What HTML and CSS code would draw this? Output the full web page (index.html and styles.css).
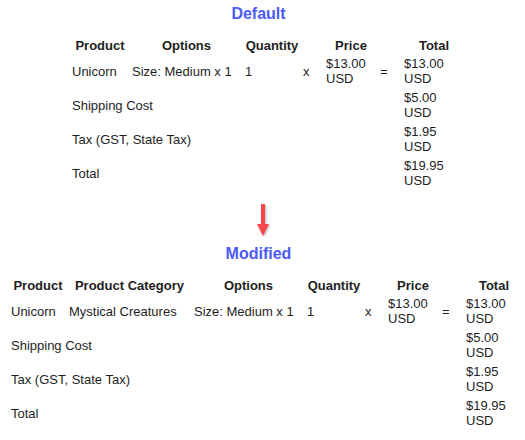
FILE: index.html
```html
<!DOCTYPE html>
<html lang="en">
<head>
<meta charset="utf-8">
<title>Order summary</title>
<link rel="stylesheet" href="styles.css">
</head>
<body>
  <h2 class="title">Default</h2>
  <div class="order order-default">
    <div class="th">Product</div>
    <div class="th">Options</div>
    <div class="th">Quantity</div>
    <div class="th"></div>
    <div class="th">Price</div>
    <div class="th"></div>
    <div class="th">Total</div>

    <div class="td">Unicorn</div>
    <div class="td">Size: Medium x 1</div>
    <div class="td">1</div>
    <div class="td">x</div>
    <div class="td">$13.00 USD</div>
    <div class="td">=</div>
    <div class="td">$13.00 USD</div>

    <div class="td label">Shipping Cost</div>
    <div class="td">$5.00 USD</div>

    <div class="td label">Tax (GST, State Tax)</div>
    <div class="td">$1.95 USD</div>

    <div class="td label">Total</div>
    <div class="td">$19.95 USD</div>
  </div>

  <div class="arrow">
    <svg width="16" height="36" viewBox="0 0 16 36" aria-hidden="true">
      <defs>
        <filter id="sh" x="-50%" y="-20%" width="200%" height="140%">
          <feDropShadow dx="1" dy="1" stdDeviation="0.8" flood-color="#000" flood-opacity="0.3"/>
        </filter>
      </defs>
      <g filter="url(#sh)" fill="#f4474b">
        <rect x="6" y="1" width="4" height="21"/>
        <polygon points="2,21 14,21 8,33"/>
      </g>
    </svg>
  </div>

  <h2 class="title">Modified</h2>
  <div class="order order-modified">
    <div class="th">Product</div>
    <div class="th">Product Category</div>
    <div class="th">Options</div>
    <div class="th">Quantity</div>
    <div class="th"></div>
    <div class="th">Price</div>
    <div class="th"></div>
    <div class="th">Total</div>

    <div class="td">Unicorn</div>
    <div class="td">Mystical Creatures</div>
    <div class="td">Size: Medium x 1</div>
    <div class="td">1</div>
    <div class="td">x</div>
    <div class="td">$13.00 USD</div>
    <div class="td">=</div>
    <div class="td">$13.00 USD</div>

    <div class="td label">Shipping Cost</div>
    <div class="td">$5.00 USD</div>

    <div class="td label">Tax (GST, State Tax)</div>
    <div class="td">$1.95 USD</div>

    <div class="td label">Total</div>
    <div class="td">$19.95 USD</div>
  </div>
</body>
</html>
```
FILE: styles.css
```css
html, body {
  margin: 0;
  padding: 0;
  background: #ffffff;
}

body {
  padding-top: 5px;
  font-family: "Liberation Sans", Arial, sans-serif;
  font-size: 13px;
  line-height: 15px;
  color: #1e1e1e;
  overflow: hidden;
}

.title {
  width: 517px;
  margin: 0 0 13px;
  font-size: 16px;
  line-height: 18px;
  font-weight: bold;
  color: #4c5af6;
  text-align: center;
}

.order {
  display: grid;
  align-items: center;
}

.order-default {
  margin-left: 70px;
  grid-template-columns: 60px 113px 58px 23px 54px 24px 64px;
}

.order-modified {
  margin-left: 9px;
  grid-template-columns: 58px 125px 113px 58px 23px 54px 24px 60px;
}

.th {
  padding: 2px 2px 1px;
  font-weight: bold;
  text-align: center;
}

.td {
  padding: 2px;
  text-align: left;
}

.label {
  grid-column: 1 / -2;
}

.arrow {
  display: flex;
  justify-content: center;
  margin: 13px 0 6px;
}

.arrow svg {
  display: block;
}
```
